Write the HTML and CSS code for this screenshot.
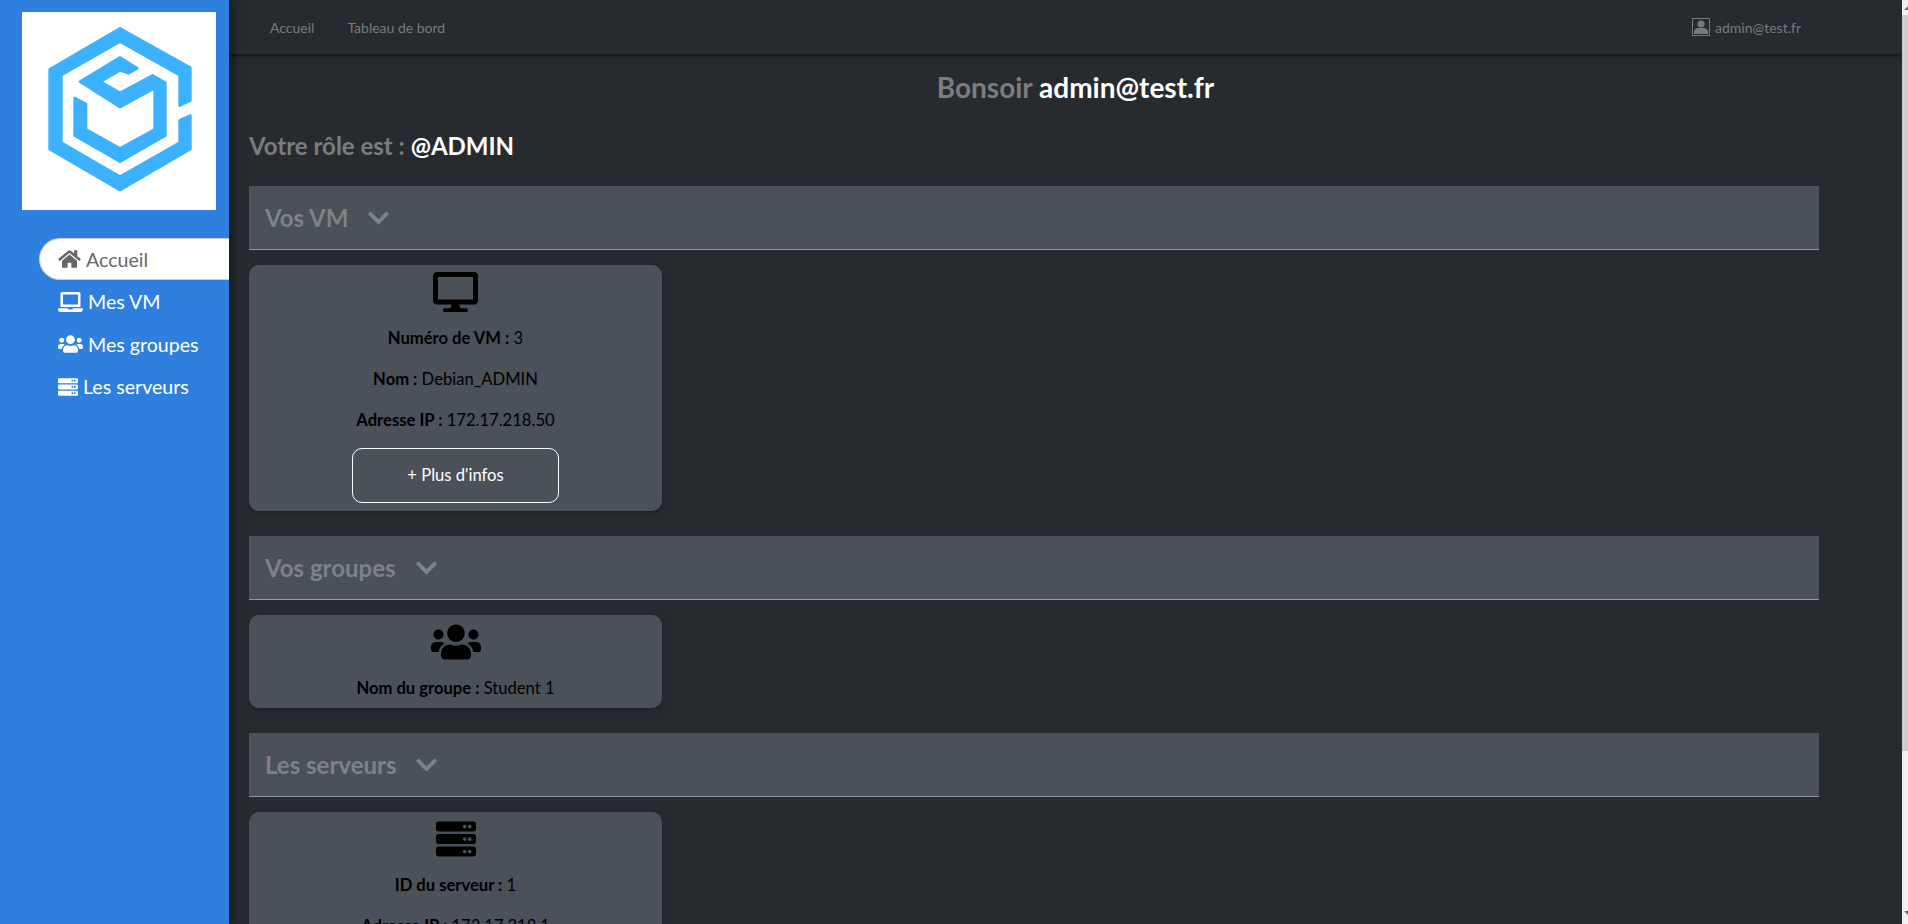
FILE: index.html
```html
<!DOCTYPE html>
<html>
<head>
    <meta charset="UTF-8">
    <title>Accueil</title>
    <link rel="stylesheet" href="styles.css">
</head>
<body>
    <div class="page">
        <!-- Sidebar -->
        <aside class="sidebar">
            <div class="logo">
                <svg viewBox="66 36 582 594" width="194" height="198">
                    <path class="logo-shape" d="M360 85L571 203V302L539 317V225L360 125L184 225V428L360 530L539 428V361L571 346V447L360 570L149 447V208Z"/>
                    <path class="logo-shape" d="M224 294L258 312V388L360 445L464 388V264L360 321L240 245L360 172L412 205L385 220L360 211L302 245L360 279L458 226L496 248V407L360 485L224 407Z"/>
                </svg>
            </div>
            <nav class="side-nav">
                <a class="side-link active" href="#">
                    <svg class="side-icon home" viewBox="0 0 576 512"><path d="M280.37 148.26L96 300.11V464a16 16 0 0 0 16 16l112.06-.29a16 16 0 0 0 15.92-16V368a16 16 0 0 1 16-16h64a16 16 0 0 1 16 16v95.64a16 16 0 0 0 16 16.05L464 480a16 16 0 0 0 16-16V300L295.67 148.26a12.19 12.19 0 0 0-15.3 0zM571.6 251.47L488 182.56V44.05a12 12 0 0 0-12-12h-56a12 12 0 0 0-12 12v72.61L318.47 43a48 48 0 0 0-61 0L4.34 251.47a12 12 0 0 0-1.6 16.9l25.5 31A12 12 0 0 0 45.15 301l235.22-193.74a12.19 12.19 0 0 1 15.3 0L530.9 301a12 12 0 0 0 16.9-1.6l25.5-31a12 12 0 0 0-1.7-16.93z"/></svg>
                    Accueil
                </a>
                <a class="side-link" href="#">
                    <svg class="side-icon" viewBox="0 0 640 512"><path d="M624 416H381.54c-.74 19.81-14.71 32-32.74 32H288c-18.69 0-33.02-17.47-32.77-32H16c-8.8 0-16 7.2-16 16v16c0 35.2 28.8 64 64 64h512c35.2 0 64-28.8 64-64v-16c0-8.8-7.2-16-16-16zM576 48c0-26.4-21.6-48-48-48H112C85.6 0 64 21.6 64 48v336h512V48zm-64 272H128V64h384v256z"/></svg>
                    Mes VM
                </a>
                <a class="side-link" href="#">
                    <svg class="side-icon" viewBox="0 0 640 512"><path d="M96 224c35.3 0 64-28.7 64-64s-28.7-64-64-64-64 28.7-64 64 28.7 64 64 64zm448 0c35.3 0 64-28.7 64-64s-28.7-64-64-64-64 28.7-64 64 28.7 64 64 64zm32 32h-64c-17.6 0-33.5 7.1-45.1 18.6 40.3 22.1 68.9 62 75.1 109.4h66c17.7 0 32-14.3 32-32v-32c0-35.3-28.7-64-64-64zm-256 0c61.9 0 112-50.1 112-112S381.9 32 320 32 208 82.1 208 144s50.1 112 112 112zm76.8 32h-8.3c-20.8 10-43.9 16-68.5 16s-47.6-6-68.5-16h-8.3C179.6 288 128 339.6 128 403.2V432c0 26.5 21.5 48 48 48h288c26.5 0 48-21.5 48-48v-28.8c0-63.6-51.6-115.2-115.2-115.2zm-223.7-13.4C161.5 263.1 145.6 256 128 256H64c-35.3 0-64 28.7-64 64v32c0 17.7 14.3 32 32 32h65.9c6.3-47.4 34.9-87.3 75.2-109.4z"/></svg>
                    Mes groupes
                </a>
                <a class="side-link" href="#">
                    <svg class="side-icon server" viewBox="0 0 512 512"><path d="M480 160H32c-17.673 0-32-14.327-32-32V64c0-17.673 14.327-32 32-32h448c17.673 0 32 14.327 32 32v64c0 17.673-14.327 32-32 32zm-48-88c-13.255 0-24 10.745-24 24s10.745 24 24 24 24-10.745 24-24-10.745-24-24-24zm-64 0c-13.255 0-24 10.745-24 24s10.745 24 24 24 24-10.745 24-24-10.745-24-24-24zm112 248H32c-17.673 0-32-14.327-32-32v-64c0-17.673 14.327-32 32-32h448c17.673 0 32 14.327 32 32v64c0 17.673-14.327 32-32 32zm-48-88c-13.255 0-24 10.745-24 24s10.745 24 24 24 24-10.745 24-24-10.745-24-24-24zm-64 0c-13.255 0-24 10.745-24 24s10.745 24 24 24 24-10.745 24-24-10.745-24-24-24zm112 248H32c-17.673 0-32-14.327-32-32v-64c0-17.673 14.327-32 32-32h448c17.673 0 32 14.327 32 32v64c0 17.673-14.327 32-32 32zm-48-88c-13.255 0-24 10.745-24 24s10.745 24 24 24 24-10.745 24-24-10.745-24-24-24zm-64 0c-13.255 0-24 10.745-24 24s10.745 24 24 24 24-10.745 24-24-10.745-24-24-24z"/></svg>
                    Les serveurs
                </a>
            </nav>
        </aside>

        <div class="main">
            <!-- Top bar -->
            <header class="topbar">
                <a class="top-link" href="#">Accueil</a>
                <a class="top-link" href="#">Tableau de bord</a>
                <a class="top-user" href="#">
                    <svg class="user-icon" viewBox="0 0 18 18">
                        <rect x="0.5" y="0.5" width="17" height="17"/>
                        <circle cx="9" cy="6" r="3.6"/>
                        <path d="M2 16v-2.2C2 11.4 4.5 10 6.5 10h5c2 0 4.500 1.400 4.500 3.800V16z"/>
                    </svg>
                    admin@test.fr
                </a>
            </header>

            <div class="content">
                <h1 class="hello">Bonsoir <span class="white">admin@test.fr</span></h1>
                <h2 class="role">Votre rôle est : <span class="white">@ADMIN</span></h2>

                <section class="block">
                    <div class="block-head">
                        Vos VM
                        <svg class="chevron" viewBox="0 0 448 512"><path d="M207.029 381.476L12.686 187.132c-9.373-9.373-9.373-24.569 0-33.941l22.667-22.667c9.357-9.357 24.522-9.375 33.901-.04L224 284.505l154.745-154.021c9.379-9.335 24.544-9.317 33.901.04l22.667 22.667c9.373 9.373 9.373 24.569 0 33.941L240.971 381.476c-9.373 9.372-24.569 9.372-33.942 0z"/></svg>
                    </div>
                    <div class="card">
                        <svg class="card-icon desktop" viewBox="0 0 576 512"><path d="M528 0H48C21.5 0 0 21.5 0 48v320c0 26.500 21.500 48 48 48h192l-16 48h-72c-13.300 0-24 10.700-24 24s10.700 24 24 24h272c13.300 0 24-10.700 24-24s-10.700-24-24-24h-72l-16-48h192c26.500 0 48-21.500 48-48V48c0-26.500-21.500-48-48-48zm-16 352H64V64h448v288z"/></svg>
                        <p><b>Numéro de VM :</b> 3</p>
                        <p><b>Nom :</b> Debian_ADMIN</p>
                        <p><b>Adresse IP :</b> 172.17.218.50</p>
                        <a class="more" href="#">+ Plus d'infos</a>
                    </div>
                </section>

                <section class="block">
                    <div class="block-head">
                        Vos groupes
                        <svg class="chevron" viewBox="0 0 448 512"><path d="M207.029 381.476L12.686 187.132c-9.373-9.373-9.373-24.569 0-33.941l22.667-22.667c9.357-9.357 24.522-9.375 33.901-.04L224 284.505l154.745-154.021c9.379-9.335 24.544-9.317 33.901.04l22.667 22.667c9.373 9.373 9.373 24.569 0 33.941L240.971 381.476c-9.373 9.372-24.569 9.372-33.942 0z"/></svg>
                    </div>
                    <div class="card">
                        <svg class="card-icon users" viewBox="0 0 640 512"><path d="M96 224c35.3 0 64-28.7 64-64s-28.7-64-64-64-64 28.7-64 64 28.7 64 64 64zm448 0c35.3 0 64-28.7 64-64s-28.7-64-64-64-64 28.7-64 64 28.7 64 64 64zm32 32h-64c-17.6 0-33.5 7.1-45.1 18.6 40.3 22.1 68.9 62 75.1 109.4h66c17.7 0 32-14.3 32-32v-32c0-35.3-28.7-64-64-64zm-256 0c61.9 0 112-50.1 112-112S381.9 32 320 32 208 82.1 208 144s50.1 112 112 112zm76.8 32h-8.3c-20.8 10-43.9 16-68.5 16s-47.6-6-68.5-16h-8.3C179.6 288 128 339.6 128 403.2V432c0 26.5 21.5 48 48 48h288c26.5 0 48-21.5 48-48v-28.8c0-63.6-51.6-115.2-115.2-115.2zm-223.7-13.4C161.5 263.1 145.6 256 128 256H64c-35.3 0-64 28.7-64 64v32c0 17.7 14.3 32 32 32h65.9c6.3-47.4 34.9-87.3 75.2-109.4z"/></svg>
                        <p class="last"><b>Nom du groupe :</b> Student 1</p>
                    </div>
                </section>

                <section class="block">
                    <div class="block-head">
                        Les serveurs
                        <svg class="chevron" viewBox="0 0 448 512"><path d="M207.029 381.476L12.686 187.132c-9.373-9.373-9.373-24.569 0-33.941l22.667-22.667c9.357-9.357 24.522-9.375 33.901-.04L224 284.505l154.745-154.021c9.379-9.335 24.544-9.317 33.901.04l22.667 22.667c9.373 9.373 9.373 24.569 0 33.941L240.971 381.476c-9.373 9.372-24.569 9.372-33.942 0z"/></svg>
                    </div>
                    <div class="card">
                        <svg class="card-icon servers" viewBox="0 0 512 512"><path d="M480 160H32c-17.673 0-32-14.327-32-32V64c0-17.673 14.327-32 32-32h448c17.673 0 32 14.327 32 32v64c0 17.673-14.327 32-32 32zm-48-88c-13.255 0-24 10.745-24 24s10.745 24 24 24 24-10.745 24-24-10.745-24-24-24zm-64 0c-13.255 0-24 10.745-24 24s10.745 24 24 24 24-10.745 24-24-10.745-24-24-24zm112 248H32c-17.673 0-32-14.327-32-32v-64c0-17.673 14.327-32 32-32h448c17.673 0 32 14.327 32 32v64c0 17.673-14.327 32-32 32zm-48-88c-13.255 0-24 10.745-24 24s10.745 24 24 24 24-10.745 24-24-10.745-24-24-24zm-64 0c-13.255 0-24 10.745-24 24s10.745 24 24 24 24-10.745 24-24-10.745-24-24-24zm112 248H32c-17.673 0-32-14.327-32-32v-64c0-17.673 14.327-32 32-32h448c17.673 0 32 14.327 32 32v64c0 17.673-14.327 32-32 32zm-48-88c-13.255 0-24 10.745-24 24s10.745 24 24 24 24-10.745 24-24-10.745-24-24-24zm-64 0c-13.255 0-24 10.745-24 24s10.745 24 24 24 24-10.745 24-24-10.745-24-24-24z"/></svg>
                        <p><b>ID du serveur :</b> 1</p>
                        <p><b>Adresse IP :</b> 172.17.218.1</p>
                    </div>
                </section>
            </div>
        </div>

        <!-- Browser scrollbar, cut at the window edge -->
        <div class="scrollbar">
            <div class="arrow up"></div>
            <div class="thumb"></div>
            <div class="arrow down"></div>
        </div>
    </div>
</body>
</html>
```

FILE: styles.css
```css
html, body {
    margin: 0;
    height: 100%;
    overflow: hidden;
}
body {
    background-color: #272b30;
    font-family: "Lato", sans-serif;
    font-size: 16px;
    color: #000000;
}
a {
    text-decoration: none;
}
.page {
    display: flex;
    height: 924px;
    overflow: hidden;
}

/* sidebar */
.sidebar {
    width: 229px;
    flex-shrink: 0;
    background-color: #2f80de;
    box-shadow: 4px 0 8px rgba(0, 0, 0, 0.4);
    position: relative;
    z-index: 2;
    padding-top: 12px;
    box-sizing: border-box;
}
.logo {
    width: 194px;
    height: 198px;
    margin-left: 22px;
    background-color: #ffffff;
}
.logo svg {
    display: block;
}
.logo-shape {
    fill: #3bb1ff;
    stroke: #3bb1ff;
    stroke-width: 8;
    stroke-linejoin: round;
}
.side-nav {
    display: flex;
    flex-direction: column;
    margin-top: 28px;
    padding-left: 39px;
}
.side-link {
    display: flex;
    align-items: center;
    gap: 5px;
    height: 42.5px;
    padding-left: 19px;
    color: #ffffff;
    font-size: 19.6px;
}
.side-link.active {
    height: 42px;
    margin-bottom: 0.5px;
    padding-left: 18px;
    background-color: #ffffff;
    color: #666666;
    border: 1px solid #cfcfcf;
    border-right: 0;
    box-sizing: border-box;
    border-radius: 21px 0 0 21px;
}
.side-icon {
    width: 25px;
    height: 20px;
    fill: currentColor;
    flex-shrink: 0;
}
.side-icon.home {
    width: 23px;
}
.side-icon.server {
    width: 20px;
}

/* top bar */
.main {
    flex: 1;
    min-width: 0;
}
.topbar {
    display: flex;
    align-items: center;
    height: 54px;
    padding-left: 41px;
    background-color: #272b30;
    box-shadow: 0 2px 4px rgba(0, 0, 0, 0.5);
    font-size: 14px;
}
.top-link {
    color: #777a7d;
    margin-right: 33px;
}
.top-user {
    display: flex;
    align-items: center;
    gap: 5px;
    margin-left: auto;
    margin-right: 101px;
    color: #777a7d;
}
.user-icon {
    width: 18px;
    height: 18px;
}
.user-icon rect {
    fill: none;
    stroke: #777a7d;
}
.user-icon circle, .user-icon path {
    fill: #777a7d;
}

/* content */
.content {
    padding-left: 20px;
}
.hello {
    margin: 0;
    padding-top: 16px;
    text-align: center;
    font-size: 28px;
    line-height: 34px;
    font-weight: 700;
    color: #7a7d80;
}
.white {
    color: #ffffff;
}
.role {
    margin: 27px 0 0;
    font-size: 24px;
    line-height: 29px;
    font-weight: 700;
    color: #7a7d80;
}
.block {
    margin-bottom: 25px;
}
.role + .block {
    margin-top: 26px;
}
.block-head {
    display: flex;
    align-items: center;
    width: 95%;
    height: 64px;
    padding-left: 16px;
    box-sizing: border-box;
    background-color: #4a5159;
    border-bottom: 1px solid #94989c;
    font-size: 24px;
    font-weight: 700;
    color: #7e8286;
}
.chevron {
    width: 21px;
    height: 24px;
    margin-left: 20px;
    fill: #7e8286;
}
.card {
    display: flex;
    flex-direction: column;
    align-items: center;
    width: 413px;
    margin-top: 15px;
    padding: 7px 0 8px;
    box-sizing: border-box;
    background-color: #4a5159;
    border-radius: 10px;
    box-shadow: 0 2px 4px rgba(0, 0, 0, 0.25);
    font-size: 16.6px;
    line-height: 24px;
}
.card p {
    margin: 0 0 17px;
}
.card p.last {
    margin-bottom: 0;
}
.card-icon {
    height: 40px;
    margin-bottom: 14px;
    fill: #000000;
}
.card-icon.desktop {
    width: 45px;
}
.card-icon.users {
    width: 50px;
}
.card-icon.servers {
    width: 40px;
}
.more {
    display: block;
    width: 207px;
    height: 55px;
    margin-top: -1px;
    line-height: 53px;
    box-sizing: border-box;
    text-align: center;
    color: #ffffff;
    border: 1px solid #ffffff;
    border-radius: 10px;
}

/* scrollbar */
.scrollbar {
    display: flex;
    flex-direction: column;
    width: 6px;
    flex-shrink: 0;
    background-color: #f1f1f1;
}
.thumb {
    height: 736px;
    margin-top: 5px;
    background-color: #cdcdcd;
}
.arrow {
    width: 0;
    height: 0;
    margin-left: 2px;
    border-left: 4px solid transparent;
    border-right: 4px solid transparent;
}
.arrow.up {
    margin-top: 6px;
    border-bottom: 4px solid #6e6e6e;
}
.arrow.down {
    margin-top: 160px;
    border-top: 4px solid #6e6e6e;
}
```
